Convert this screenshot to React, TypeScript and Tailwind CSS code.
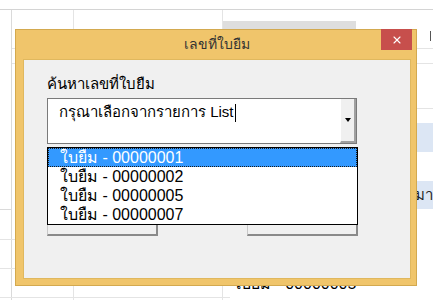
import { X } from 'lucide-react';

const rows = ['ใบยืม - 00000001', 'ใบยืม - 00000002', 'ใบยืม - 00000005', 'ใบยืม - 00000007'];

const Sheet = () => (
  <div className="absolute inset-0 flex flex-col">
    <div className="h-[10px] border-b border-[#d4d4d4]" />
    <div className="relative flex flex-1">
      <div className="w-[12px] border-r border-[#dadada]" />
      <div className="flex w-[64px] flex-col border-r border-[#e4e4e4]">
        <div className="h-[39px] border-b border-[#e4e4e4]" />
        <div className="h-[15px] border-b border-[#e4e4e4]" />
      </div>
      <div className="w-[154px] border-r border-[#e4e4e4]" />
      <div className="flex w-[137px] flex-col">
        <div className="mt-[11px] h-[8px] bg-[#dedede]" />
      </div>
      <div className="flex flex-1 flex-col">
        <div className="h-[39px] border-b border-[#e4e4e4]" />
        <div className="h-[15px] border-b border-[#e4e4e4]" />
        <div className="h-[45px] border-b border-[#e4e4e4]" />
        <div className="h-[14px]" />
        <div className="h-[29px] bg-[#dce6f4]" />
        <div className="h-[29px]" />
        <div className="h-[28px] bg-[#dce6f4] pl-[50px] text-[15px] leading-[28px] text-[#222]">กมา</div>
      </div>
    </div>
    <div className="pointer-events-none absolute left-0 top-[209px] w-[12px] border-b border-[#dadada]" />
    <div className="pointer-events-none absolute left-0 top-[239px] w-[230px] border-b border-[#e4e4e4]" />
    <div className="pointer-events-none absolute left-0 top-[268px] w-[230px] border-b border-[#e4e4e4]" />
    <div className="pointer-events-none absolute left-0 top-[297px] w-[230px] border-b border-[#e4e4e4]" />
    <div className="absolute left-[233px] top-[272px] text-[16px] text-black">ใบยืม - 00000005</div>
    <div className="absolute left-[430px] top-[31px] h-[10px] w-px bg-[#555]" />
  </div>
);

export default function App() {
  return (
    <div className="relative h-[300px] w-[433px] overflow-hidden bg-white font-['Tahoma','Liberation_Sans','DejaVu_Sans',sans-serif]">
      <Sheet />
      <div className="absolute left-[15px] top-[29px] flex h-[257px] w-[402px] flex-col border border-[#d3a94f] bg-[#f0c56b] pb-[6px] pl-[7px] pr-[5px]">
        <div className="relative flex h-[29px] items-center justify-center">
          <span className="text-[14px] text-[#333]">เลขที่ใบยืม</span>
          <button className="absolute right-[-1px] top-[-1px] flex h-[21px] w-[31px] items-center justify-center bg-[#c74f4c] text-white">
            <X size={12} strokeWidth={2.25} />
          </button>
        </div>
        <div className="relative flex-1 border border-[#e0b85e] bg-[#f0f0f0] pl-[23px] pt-[11px]">
          <div className="text-[15px] leading-[26px] text-black">ค้นหาเลขที่ใบยืม</div>
          <div className="mt-[1px] flex h-[46px] w-[310px] border border-[#7a7a7a] bg-white">
            <div className="flex-1 pl-[11px] pt-[2px] text-[15px] leading-[22px] text-black">
              กรุณาเลือกจากรายการ List<span className="ml-px inline-block h-[18px] w-px bg-black align-middle" />
            </div>
            <div className="flex w-[16px] items-center justify-center border-b-2 border-l border-r-2 border-b-[#a0a0a0] border-l-white border-r-[#a0a0a0] bg-[#f0f0f0]">
              <div className="h-0 w-0 border-x-[3.5px] border-t-[4px] border-x-transparent border-t-black" />
            </div>
          </div>
          <div className="mt-[56px] flex w-[311px] justify-between">
            <div className="h-[36px] w-[111px] border-b-2 border-l border-r-2 border-t border-b-[#8a8a8a] border-l-[#c8c8c8] border-r-[#8a8a8a] border-t-white bg-[#f0f0f0]" />
            <div className="h-[36px] w-[111px] border-b-2 border-l border-r-2 border-t border-b-[#8a8a8a] border-l-[#c8c8c8] border-r-[#8a8a8a] border-t-white bg-[#f0f0f0]" />
          </div>
          <div className="absolute left-[23px] top-[87px] flex w-[311px] flex-col border border-black bg-white">
            {rows.map((r, i) => (
              <div
                key={r}
                className={
                  i === 0
                    ? 'h-[19px] border border-dotted border-[#1a1a1a] bg-[#3399ff] pl-[11px] text-[16px] leading-[17px] text-white'
                    : 'h-[19px] pl-[12px] text-[16px] leading-[19px] text-black'
                }
              >
                {r}
              </div>
            ))}
          </div>
        </div>
      </div>
    </div>
  );
}
